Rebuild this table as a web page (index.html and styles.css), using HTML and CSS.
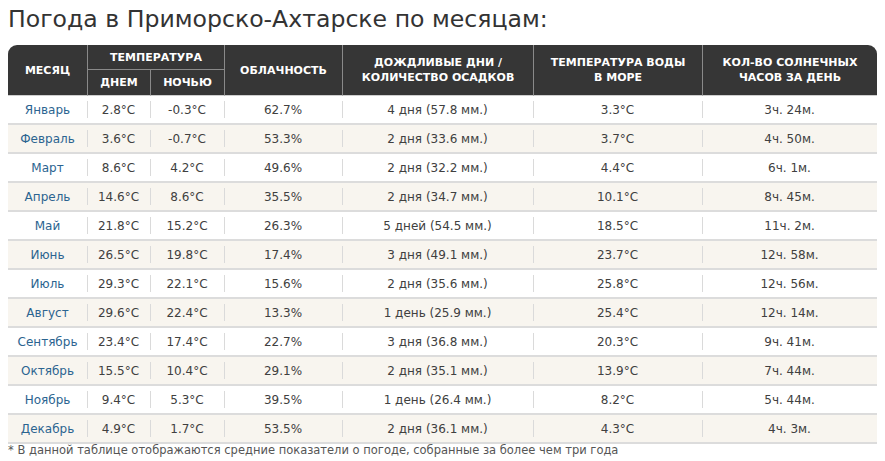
FILE: index.html
```html
<!DOCTYPE html>
<html lang="ru">
<head>
<meta charset="utf-8">
<title>Погода в Приморско-Ахтарске по месяцам</title>
<link rel="stylesheet" href="styles.css">
</head>
<body>
<div class="page">
  <h1 class="title">Погода в Приморско-Ахтарске по месяцам:</h1>
  <table class="climate">
    <colgroup>
      <col class="c-month"><col class="c-day"><col class="c-night"><col class="c-cloud"><col class="c-rain"><col class="c-water"><col class="c-sun">
    </colgroup>
    <thead>
      <tr class="h1">
        <th rowspan="2" class="first">МЕСЯЦ</th>
        <th colspan="2" class="temp">ТЕМПЕРАТУРА</th>
        <th rowspan="2">ОБЛАЧНОСТЬ</th>
        <th rowspan="2">ДОЖДЛИВЫЕ ДНИ /<br>КОЛИЧЕСТВО ОСАДКОВ</th>
        <th rowspan="2">ТЕМПЕРАТУРА ВОДЫ<br>В МОРЕ</th>
        <th rowspan="2" class="last">КОЛ-ВО СОЛНЕЧНЫХ<br>ЧАСОВ ЗА ДЕНЬ</th>
      </tr>
      <tr class="h2">
        <th class="sub">ДНЕМ</th>
        <th class="sub">НОЧЬЮ</th>
      </tr>
    </thead>
    <tbody>
      <tr><td class="m">Январь</td><td>2.8°C</td><td>-0.3°C</td><td>62.7%</td><td>4 дня (57.8 мм.)</td><td>3.3°C</td><td>3ч. 24м.</td></tr>
      <tr><td class="m">Февраль</td><td>3.6°C</td><td>-0.7°C</td><td>53.3%</td><td>2 дня (33.6 мм.)</td><td>3.7°C</td><td>4ч. 50м.</td></tr>
      <tr><td class="m">Март</td><td>8.6°C</td><td>4.2°C</td><td>49.6%</td><td>2 дня (32.2 мм.)</td><td>4.4°C</td><td>6ч. 1м.</td></tr>
      <tr><td class="m">Апрель</td><td>14.6°C</td><td>8.6°C</td><td>35.5%</td><td>2 дня (34.7 мм.)</td><td>10.1°C</td><td>8ч. 45м.</td></tr>
      <tr><td class="m">Май</td><td>21.8°C</td><td>15.2°C</td><td>26.3%</td><td>5 дней (54.5 мм.)</td><td>18.5°C</td><td>11ч. 2м.</td></tr>
      <tr><td class="m">Июнь</td><td>26.5°C</td><td>19.8°C</td><td>17.4%</td><td>3 дня (49.1 мм.)</td><td>23.7°C</td><td>12ч. 58м.</td></tr>
      <tr><td class="m">Июль</td><td>29.3°C</td><td>22.1°C</td><td>15.6%</td><td>2 дня (35.6 мм.)</td><td>25.8°C</td><td>12ч. 56м.</td></tr>
      <tr><td class="m">Август</td><td>29.6°C</td><td>22.4°C</td><td>13.3%</td><td>1 день (25.9 мм.)</td><td>25.4°C</td><td>12ч. 14м.</td></tr>
      <tr><td class="m">Сентябрь</td><td>23.4°C</td><td>17.4°C</td><td>22.7%</td><td>3 дня (36.8 мм.)</td><td>20.3°C</td><td>9ч. 41м.</td></tr>
      <tr><td class="m">Октябрь</td><td>15.5°C</td><td>10.4°C</td><td>29.1%</td><td>2 дня (35.1 мм.)</td><td>13.9°C</td><td>7ч. 44м.</td></tr>
      <tr><td class="m">Ноябрь</td><td>9.4°C</td><td>5.3°C</td><td>39.5%</td><td>1 день (26.4 мм.)</td><td>8.2°C</td><td>5ч. 44м.</td></tr>
      <tr><td class="m">Декабрь</td><td>4.9°C</td><td>1.7°C</td><td>53.5%</td><td>2 дня (36.1 мм.)</td><td>4.3°C</td><td>4ч. 3м.</td></tr>
    </tbody>
  </table>
  <p class="note">* В данной таблице отображаются средние показатели о погоде, собранные за более чем три года</p>
</div>
</body>
</html>
```

FILE: styles.css
```css
html, body {
  margin: 0;
  padding: 0;
  background: #ffffff;
}

.page {
  padding: 0 8px;
  font-family: "DejaVu Sans", Verdana, sans-serif;
  color: #333333;
}

.title {
  margin: 0;
  padding-top: 4px;
  height: 41px;
  font-family: "DejaVu Sans", Verdana, sans-serif;
  font-weight: normal;
  font-size: 23.6px;
  line-height: 31px;
  color: #333333;
}

.climate {
  width: 869px;
  table-layout: fixed;
  border-collapse: separate;
  border-spacing: 0;
  font-size: 12px;
}

.c-month { width: 79px; }
.c-day { width: 63px; }
.c-night { width: 74px; }
.c-cloud { width: 118px; }
.c-rain { width: 191px; }
.c-water { width: 169px; }
.c-sun { width: 175px; }

.climate th {
  background: #363636;
  color: #ffffff;
  font-weight: bold;
  font-size: 11px;
  line-height: 15px;
  text-align: center;
  padding: 0;
  border-left: 1px solid #8a8a8a;
  border-bottom: 1px solid #cfcfcf;
}

.climate th.first {
  border-left: none;
  border-top-left-radius: 9px;
}

.climate th.last {
  border-top-right-radius: 9px;
}

.climate .h1 th { height: 24px; }
.climate .h1 th.temp { border-bottom: 1px solid #8a8a8a; }
.climate .h2 th { height: 25px; }
.climate .h2 th.sub:first-child { border-left: 1px solid #8a8a8a; }

.climate td {
  height: 27px;
  padding: 0;
  text-align: center;
  font-size: 12px;
  color: #404040;
  border-bottom: 2px solid #dcdcdc;
  background-image: linear-gradient(#dadada, #dadada);
  background-size: 1px 17px;
  background-position: left center;
  background-repeat: no-repeat;
}

.climate td.m {
  color: #2b6490;
  background-image: none;
}

.climate tbody tr:nth-child(even) td {
  background-color: #f8f5ef;
}

.note {
  margin: 0;
  font-size: 11.5px;
  line-height: 13px;
  color: #555555;
}
```
